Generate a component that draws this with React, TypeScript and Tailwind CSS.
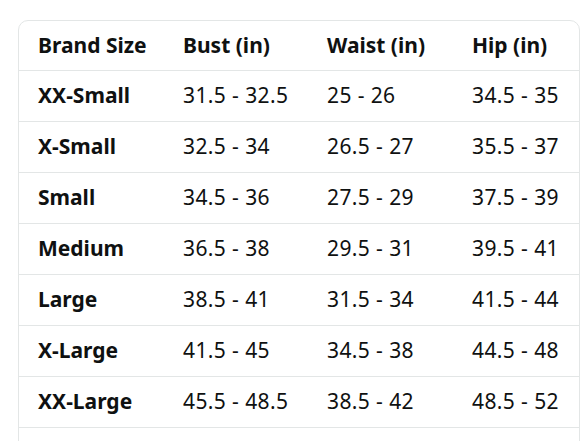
const rows = [
  ["XX-Small", "31.5 - 32.5", "25 - 26", "34.5 - 35"],
  ["X-Small", "32.5 - 34", "26.5 - 27", "35.5 - 37"],
  ["Small", "34.5 - 36", "27.5 - 29", "37.5 - 39"],
  ["Medium", "36.5 - 38", "29.5 - 31", "39.5 - 41"],
  ["Large", "38.5 - 41", "31.5 - 34", "41.5 - 44"],
  ["X-Large", "41.5 - 45", "34.5 - 38", "44.5 - 48"],
  ["XX-Large", "45.5 - 48.5", "38.5 - 42", "48.5 - 52"],
  ["", "", "", ""],
];

export default function App() {
  return (
    <div
      className="w-[588px] h-[441px] overflow-hidden bg-white pt-[20px] pl-[18px]"
      style={{ fontFamily: '"Noto Sans", "Liberation Sans", sans-serif' }}
    >
      <div className="w-[562px] border border-[#e3e6e6] rounded-[10px] text-[#0f1111] text-[21px]">
        <div className="grid grid-cols-[145px_144px_145px_1fr] h-[50px] items-center px-[19px] font-bold border-b border-[#e3e6e6]">
          <div>Brand Size</div>
          <div>Bust (in)</div>
          <div>Waist (in)</div>
          <div>Hip (in)</div>
        </div>
        {rows.map((r, i) => (
          <div
            key={i}
            className="grid grid-cols-[145px_144px_145px_1fr] h-[51px] items-center px-[19px] border-b border-[#e3e6e6]"
          >
            <div className="font-bold">{r[0]}</div>
            <div className="tracking-[0.4px]">{r[1]}</div>
            <div className="tracking-[0.4px]">{r[2]}</div>
            <div className="tracking-[0.4px]">{r[3]}</div>
          </div>
        ))}
      </div>
    </div>
  );
}
